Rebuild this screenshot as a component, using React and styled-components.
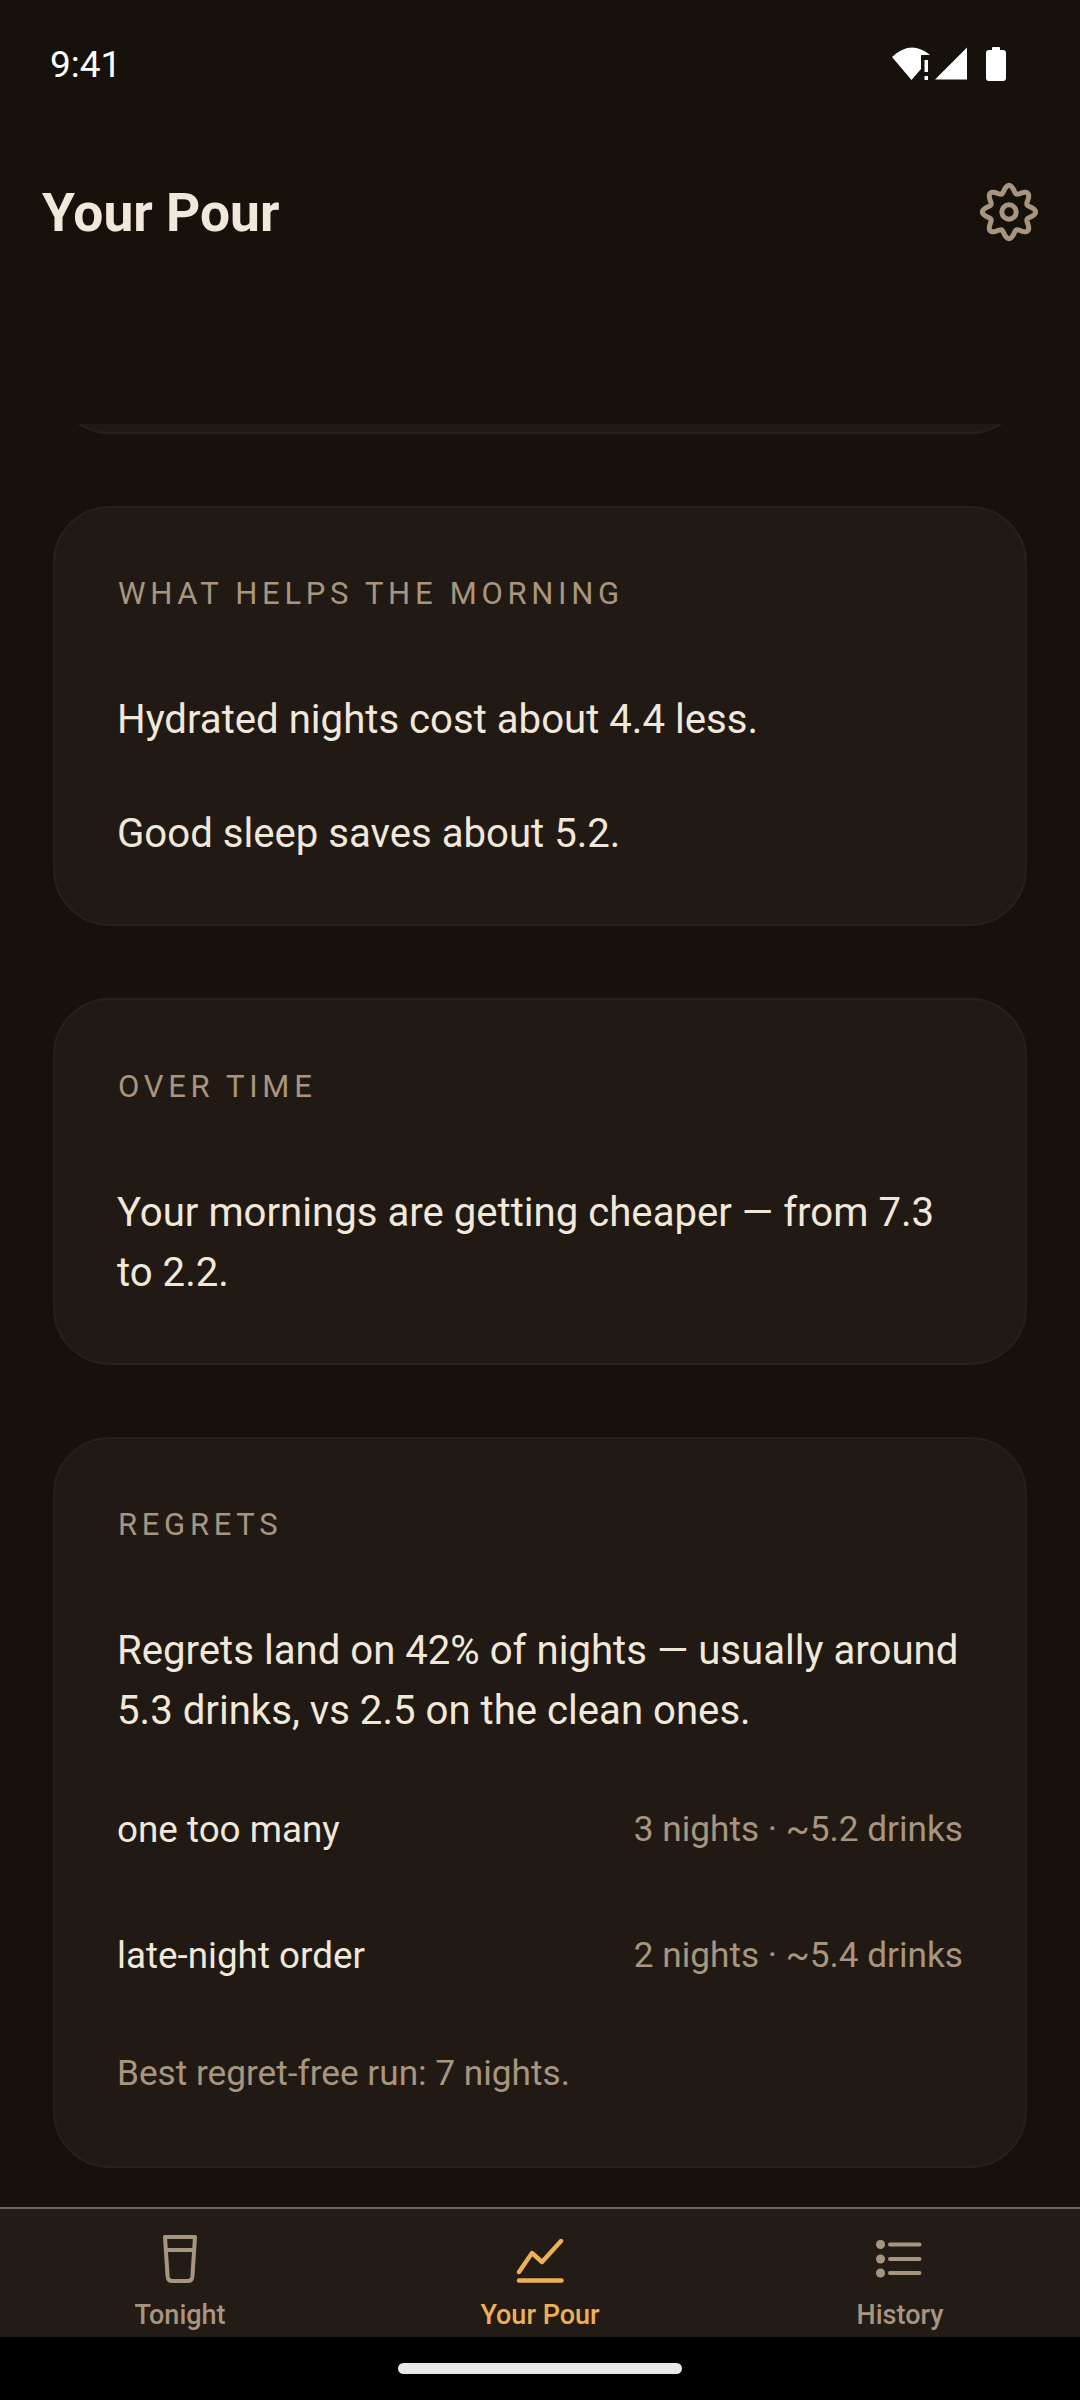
import React from 'react'
import styled, { createGlobalStyle } from 'styled-components'

const GlobalStyle = createGlobalStyle`
  html, body {
    margin: 0;
    padding: 0;
    background: #16110b;
  }
  * {
    box-sizing: border-box;
  }
`

const Screen = styled.div`
  width: 1080px;
  height: 2400px;
  display: flex;
  flex-direction: column;
  background: #16110b;
  font-family: Roboto, "Liberation Sans", sans-serif;
  overflow: hidden;
`

const StatusBar = styled.div`
  height: 127px;
  flex-shrink: 0;
  display: flex;
  justify-content: space-between;
  align-items: flex-start;
  padding: 46px 72px 0 50px;
  color: #ffffff;
`

const Clock = styled.div`
  font-size: 37px;
  line-height: 38px;
`

const Header = styled.div`
  height: 170px;
  flex-shrink: 0;
  display: flex;
  justify-content: space-between;
  align-items: center;
  padding: 0 41px 0 42px;
`

const Title = styled.h1`
  margin: 2px 0 0;
  font-size: 53.3px;
  font-weight: 700;
  color: #f0e8da;
`

const Gear = styled.svg`
  width: 60px;
  height: 60px;
  display: block;
  color: #a89580;
`

const Scroll = styled.div`
  flex: 1;
  margin-top: 127px;
  min-height: 0;
  overflow: hidden;
  padding: 0 53px;
`

const Stack = styled.div`
  display: flex;
  flex-direction: column;
  gap: 72px;
  margin-top: -121px;
`

const Card = styled.section`
  background: #211a14;
  border: 2.6px solid #28211a;
  border-radius: 57px;
  padding: 66.5px 62px 60px;
  min-height: ${({ $min }) => $min || 0}px;
`

const Label = styled.div`
  padding-left: 1px;
  font-size: 31px;
  line-height: 40px;
  letter-spacing: 4.7px;
  color: #a89580;
  margin-bottom: 76px;
`

const Body = styled.p`
  margin: 0;
  font-size: 40.15px;
  line-height: 60px;
  color: #f0e8da;
  & + & {
    margin-top: 54px;
  }
`

const Rows = styled.div`
  display: flex;
  flex-direction: column;
  gap: 66px;
  margin-top: 58px;
`

const Row = styled.div`
  display: flex;
  justify-content: space-between;
  align-items: center;
  height: 60px;
`

const RowName = styled.span`
  font-size: 36.8px;
  color: #f0e8da;
`

const RowValue = styled.span`
  font-size: 35.2px;
  color: #a89580;
`

const Note = styled.div`
  margin: 63px 0 8px;
  font-size: 35.2px;
  line-height: 50px;
  color: #a89580;
`

const Nav = styled.nav`
  height: 130px;
  flex-shrink: 0;
  display: flex;
  background: #231c16;
  border-top: 2px solid #6b655c;
`

const Tab = styled.div`
  flex: 1;
  display: flex;
  flex-direction: column;
  align-items: center;
  padding-top: 24px;
  color: ${({ $active }) => ($active ? '#edb054' : '#a89580')};
`

const TabIcon = styled.svg`
  width: 48px;
  height: 52px;
  display: block;
`

const TabLabel = styled.div`
  margin-top: 14px;
  font-size: 27px;
  line-height: 32px;
  font-weight: 500;
`

const GestureBar = styled.div`
  height: 63px;
  flex-shrink: 0;
  background: #000000;
  display: flex;
  justify-content: center;
  padding-top: 26px;
`

const Handle = styled.div`
  width: 284px;
  height: 11px;
  border-radius: 6px;
  background: #e8e8e8;
`

const StatusIcons = () => (
  <svg width="116" height="36" viewBox="892 46 116 36" fill="#ffffff">
    <path d="M892 57 Q911 39 930 55 L921 55 L921 69 L911.5 80 Z" />
    <path d="M924.5 60 H928 V72 H924.5 Z M924.5 76 H928 V80 H924.5 Z" />
    <path d="M935 79.5 L967 47.5 V79.5 Z" />
    <path d="M992 50 V48 Q992 47 993 47 H999 Q1000 47 1000 48 V50 H1003 Q1006 50 1006 53 V78 Q1006 81 1003 81 H989 Q986 81 986 78 V53 Q986 50 989 50 Z" />
  </svg>
)

// eight lobed cog outline, sampled round the circle
const cogPath = Array.from({ length: 160 }, (_, i) => {
  const a = (i / 160) * Math.PI * 2
  const r = 23 + 3.6 * Math.cos(8 * a)
  return `${(30 + r * Math.cos(a)).toFixed(2)} ${(30 + r * Math.sin(a)).toFixed(2)}`
}).join(' L ')

const GearIcon = () => (
  <Gear viewBox="0 0 60 60" fill="none" stroke="currentColor" strokeWidth="5">
    <path d={`M ${cogPath} Z`} />
    <circle cx="30" cy="30" r="7.2" />
  </Gear>
)

const GlassIcon = () => (
  <TabIcon viewBox="0 0 48 52" fill="none" stroke="currentColor" strokeWidth="4" strokeLinejoin="round">
    <path d="M9 4 H39 L36.4 43.5 Q36 48 31.5 48 H16.5 Q12 48 11.6 43.5 Z" />
    <path d="M10 17 H38" />
  </TabIcon>
)

const ChartIcon = () => (
  <TabIcon viewBox="0 0 48 52" fill="none" stroke="currentColor" strokeWidth="4.4" strokeLinecap="round" strokeLinejoin="round">
    <path d="M3 39 L16 20 L26 29 L45 8" />
    <path d="M3 47.5 H45.5" />
  </TabIcon>
)

const ListIcon = () => (
  <TabIcon viewBox="0 0 48 52" fill="none" stroke="currentColor" strokeWidth="4" strokeLinecap="round">
    <circle cx="4.5" cy="11.5" r="4.5" fill="currentColor" stroke="none" />
    <circle cx="4.5" cy="26" r="4.5" fill="currentColor" stroke="none" />
    <circle cx="4.5" cy="40" r="4.5" fill="currentColor" stroke="none" />
    <path d="M14 11.5 H43.5 M14 26 H43.5 M14 40 H43.5" />
  </TabIcon>
)

const regrets = [
  { name: 'one too many', value: '3 nights · ~5.2 drinks' },
  { name: 'late-night order', value: '2 nights · ~5.4 drinks' },
]

const tabs = [
  { name: 'Tonight', icon: <GlassIcon /> },
  { name: 'Your Pour', icon: <ChartIcon />, active: true },
  { name: 'History', icon: <ListIcon /> },
]

export default function App() {
  return (
    <Screen>
      <GlobalStyle />
      <StatusBar>
        <Clock>9:41</Clock>
        <StatusIcons />
      </StatusBar>
      <Header>
        <Title>Your Pour</Title>
        <GearIcon />
      </Header>
      <Scroll>
        <Stack>
          <Card $min={107} />
          <Card>
            <Label>WHAT HELPS THE MORNING</Label>
            <Body>Hydrated nights cost about 4.4 less.</Body>
            <Body>Good sleep saves about 5.2.</Body>
          </Card>
          <Card>
            <Label>OVER TIME</Label>
            <Body>Your mornings are getting cheaper — from 7.3 to 2.2.</Body>
          </Card>
          <Card>
            <Label>REGRETS</Label>
            <Body>Regrets land on 42% of nights — usually around 5.3 drinks, vs 2.5 on the clean ones.</Body>
            <Rows>
              {regrets.map((r) => (
                <Row key={r.name}>
                  <RowName>{r.name}</RowName>
                  <RowValue>{r.value}</RowValue>
                </Row>
              ))}
            </Rows>
            <Note>Best regret-free run: 7 nights.</Note>
          </Card>
        </Stack>
      </Scroll>
      <Nav>
        {tabs.map((t) => (
          <Tab key={t.name} $active={t.active}>
            {t.icon}
            <TabLabel>{t.name}</TabLabel>
          </Tab>
        ))}
      </Nav>
      <GestureBar>
        <Handle />
      </GestureBar>
    </Screen>
  )
}
